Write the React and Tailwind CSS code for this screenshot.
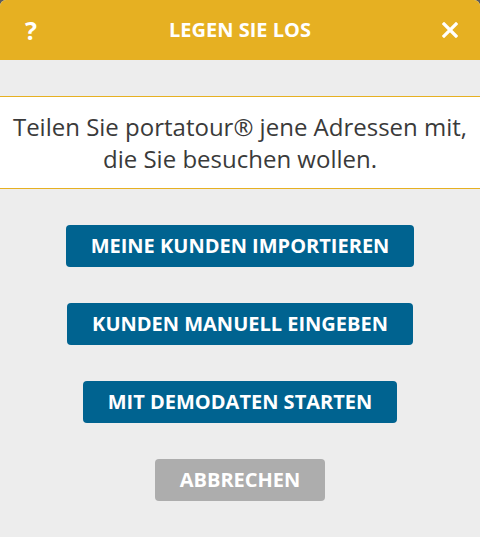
import React from 'react';

const buttons = [
  { label: 'MEINE KUNDEN IMPORTIEREN', primary: true },
  { label: 'KUNDEN MANUELL EINGEBEN', primary: true },
  { label: 'MIT DEMODATEN STARTEN', primary: true },
  { label: 'ABBRECHEN', primary: false },
];

export default function App() {
  return (
    <div className="bg-[#5c5c5c] w-[480px] h-[537px]" style={{ fontFamily: '"Open Sans", sans-serif' }}>
      <div className="flex flex-col h-full rounded-t-[6px] overflow-hidden bg-[#ededed]">
        {/* Header */}
        <div className="h-[60px] bg-[#e6b022] flex items-center justify-between pl-[24px] pr-[22px] text-white">
          <button className="w-[14px] text-[25px] font-bold leading-none">?</button>
          <h1 className="text-[20px] font-bold">LEGEN SIE LOS</h1>
          <button className="w-[16px] h-[16px] flex items-center justify-center">
            <svg width="16" height="16" viewBox="0 0 16 16">
              <path d="M2 2 L14 14 M14 2 L2 14" stroke="white" strokeWidth="3.2" strokeLinecap="square" />
            </svg>
          </button>
        </div>

        {/* Message */}
        <div className="mt-[36px] bg-white border-y border-[#e6b022] pt-[14px] pb-[13px] text-center text-[24px] leading-[32px] text-[#3a3a3a]">
          Teilen Sie portatour® jene Adressen mit,
          <br />
          die Sie besuchen wollen.
        </div>

        {/* Actions */}
        <div className="flex flex-col items-center gap-[36px] pt-[36px]">
          {buttons.map((b) => (
            <button
              key={b.label}
              className={
                b.primary
                  ? 'h-[42px] px-[25px] rounded-[4px] bg-[#006390] text-white text-[20px] font-bold'
                  : 'h-[42px] px-[25px] rounded-[4px] bg-[#adadad] text-white text-[20px] font-bold'
              }
            >
              {b.label}
            </button>
          ))}
        </div>
      </div>
    </div>
  );
}
